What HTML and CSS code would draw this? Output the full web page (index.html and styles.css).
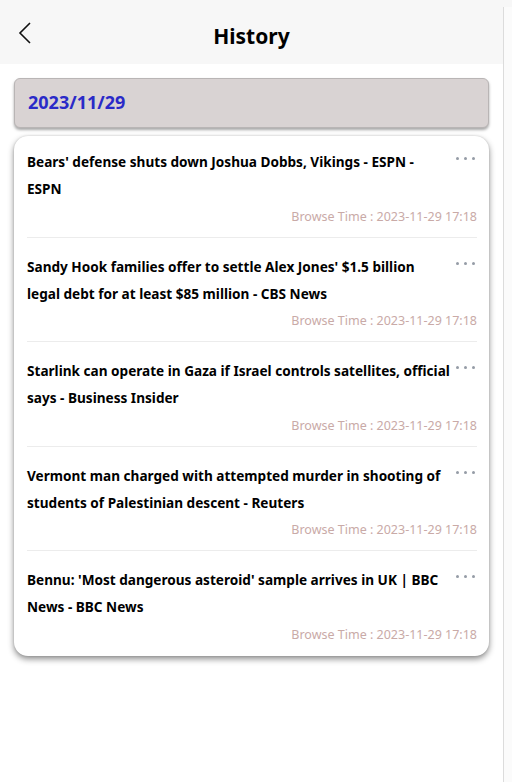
FILE: index.html
```html
<!DOCTYPE html>
<html lang="en">
<head>
<meta charset="utf-8">
<title>History</title>
<link rel="stylesheet" href="styles.css">
</head>
<body>
<div class="frame">
  <div class="app">
    <header class="topbar">
      <button class="back" aria-label="Back">
        <svg width="16" height="24" viewBox="0 0 16 24"><path d="M13 2 L3 12 L13 22" fill="none" stroke="#111" stroke-width="1.6"/></svg>
      </button>
      <h1 class="title">History</h1>
    </header>
    <main class="content">
      <div class="date-bar">2023/11/29</div>
      <div class="card">
        <div class="item">
          <div class="item-head">
            <div class="item-title">Bears' defense shuts down Joshua Dobbs, Vikings - ESPN -<br>ESPN</div>
            <span class="more"><i></i><i></i><i></i></span>
          </div>
          <div class="item-time">Browse Time : 2023-11-29 17:18</div>
        </div>
        <div class="item">
          <div class="item-head">
            <div class="item-title">Sandy Hook families offer to settle Alex Jones' $1.5 billion<br>legal debt for at least $85 million - CBS News</div>
            <span class="more"><i></i><i></i><i></i></span>
          </div>
          <div class="item-time">Browse Time : 2023-11-29 17:18</div>
        </div>
        <div class="item">
          <div class="item-head">
            <div class="item-title">Starlink can operate in Gaza if Israel controls satellites, official<br>says - Business Insider</div>
            <span class="more"><i></i><i></i><i></i></span>
          </div>
          <div class="item-time">Browse Time : 2023-11-29 17:18</div>
        </div>
        <div class="item">
          <div class="item-head">
            <div class="item-title">Vermont man charged with attempted murder in shooting of<br>students of Palestinian descent - Reuters</div>
            <span class="more"><i></i><i></i><i></i></span>
          </div>
          <div class="item-time">Browse Time : 2023-11-29 17:18</div>
        </div>
        <div class="item">
          <div class="item-head">
            <div class="item-title">Bennu: 'Most dangerous asteroid' sample arrives in UK | BBC<br>News - BBC News</div>
            <span class="more"><i></i><i></i><i></i></span>
          </div>
          <div class="item-time">Browse Time : 2023-11-29 17:18</div>
        </div>
      </div>
    </main>
  </div>
  <div class="scroll-strip"></div>
</div>
</body>
</html>
```
FILE: styles.css
```css
* { box-sizing: border-box; }
html, body { margin: 0; padding: 0; }
body {
  background: #f7f7f7;
  font-family: "Noto Sans", "Open Sans", sans-serif;
  color: #000;
}
.frame {
  display: flex;
  width: 512px;
  height: 782px;
}
.app {
  width: 503px;
  display: flex;
  flex-direction: column;
  background: #fff;
}
.scroll-strip {
  flex: 1;
  margin-top: 7px;
  border-left: 1px solid #dcdcdc;
  background: #fbfbfb;
}
.topbar {
  height: 64px;
  background: #f7f7f7;
  display: flex;
  align-items: center;
  justify-content: center;
  position: relative;
}
.back {
  position: absolute;
  left: 16px;
  top: 20px;
  padding: 0;
  border: 0;
  background: none;
  width: 18px;
  height: 26px;
  display: flex;
  align-items: center;
  justify-content: center;
}
.title {
  margin: 0;
  font-size: 21px;
  font-weight: 700;
  padding-top: 8px;
  letter-spacing: 0;
}
.content {
  padding: 14px 14px 0 14px;
}
.date-bar {
  height: 50px;
  background: #d9d3d3;
  border: 1px solid #b9b5b5;
  border-radius: 6px;
  box-shadow: 0 2px 3px rgba(0,0,0,0.35);
  color: #2a2ac8;
  font-weight: 700;
  font-size: 18px;
  display: flex;
  align-items: center;
  padding-left: 13px;
  padding-bottom: 2px;
}
.card {
  margin-top: 8px;
  background: #fff;
  border-radius: 14px;
  box-shadow: 0 3px 6px rgba(0,0,0,0.45), 0 0 2px rgba(0,0,0,0.15);
  padding: 0 12px 0 13px;
}
.item {
  padding: 15px 0 11px;
  border-top: 1px solid #ececec;
}
.item:first-child {
  padding-top: 12px;
  border-top: 0;
}
.item:last-child {
  padding-bottom: 12px;
}
.item-head {
  display: flex;
  justify-content: space-between;
  align-items: flex-start;
}
.item-title {
  width: 426px;
  font-size: 13.6px;
  font-weight: 700;
  line-height: 27px;
}
.more {
  display: flex;
  gap: 5px;
  margin-top: 9px;
  margin-right: 2px;
}
.more i {
  width: 3px;
  height: 3px;
  border-radius: 50%;
  background: #959ca6;
}
.item-time {
  margin-top: 5.5px;
  text-align: right;
  font-size: 12.5px;
  line-height: 18px;
  color: #c9aaa7;
}
```
